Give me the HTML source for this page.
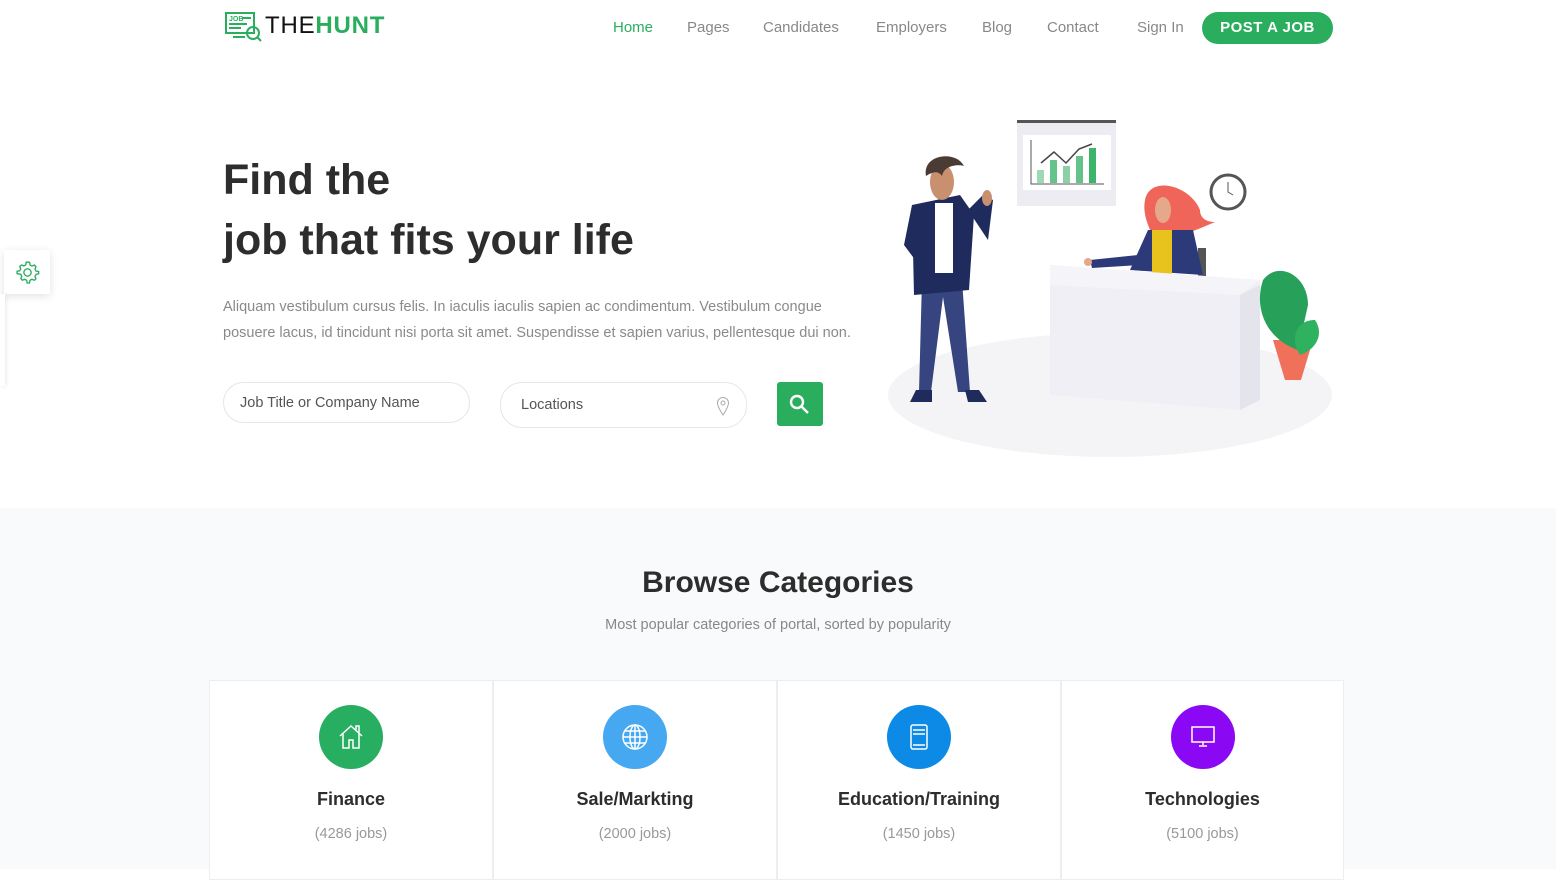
<!DOCTYPE html>
<html><head><meta charset="utf-8"><style>
*{box-sizing:border-box;margin:0;padding:0}
body{width:1556px;height:869px;overflow:hidden;background:#fff;font-family:"Liberation Sans",sans-serif;position:relative}
.abs{position:absolute}
nav a{position:absolute;top:19px;font-size:15px;color:#888;text-decoration:none}
.btn{left:1202px;top:12px;width:131px;height:32px;border-radius:16px;background:#2aae5e;color:#fff;font-size:15px;font-weight:bold;text-align:center;line-height:32px;letter-spacing:.5px}
h1{position:absolute;left:223px;font-size:43px;font-weight:bold;color:#2d2d2d}
.p{left:223px;font-size:14.5px;color:#8a8a8a;line-height:26px;width:640px}
.inp{border:1px solid #e6e6e6;border-radius:22px;height:42px;font-size:14.5px;color:#555;padding-left:16px;line-height:40px}
.sec{left:0;top:508px;width:1556px;height:361px;background:#f8fafc}
.card{top:680px;width:284px;height:200px;background:#fff;border:1px solid #eceff2;text-align:center}
.circ{width:64px;height:64px;border-radius:50%;margin:24px auto 0;display:flex;align-items:center;justify-content:center}
.card h3{font-size:18px;color:#2d2d2d;margin-top:20px}
.card p{font-size:14.5px;color:#999;margin-top:16px}
</style></head><body>
<svg class="abs" style="left:225px;top:12px" width="38" height="30" viewBox="0 0 38 30" fill="none" stroke="#2aae5e" stroke-width="2"><rect x="1" y="1" width="28" height="20"/><text x="4" y="9" font-size="7" fill="#2aae5e" stroke="none" font-weight="bold" font-family="Liberation Sans">JOB</text><line x1="17" y1="6" x2="26" y2="6"/><line x1="4" y1="12" x2="22" y2="12"/><line x1="4" y1="16" x2="16" y2="16"/><line x1="8" y1="25" x2="20" y2="25"/><circle cx="28" cy="21" r="6"/><line x1="32" y1="25" x2="36" y2="29"/></svg>
<div class="abs" style="left:265px;top:12px;font-size:24px;letter-spacing:.8px"><span style="color:#111">THE</span><b style="color:#2aae5e">HUNT</b></div>
<nav><a style="left:613px;color:#2aae5e">Home</a><a style="left:687px">Pages</a><a style="left:763px">Candidates</a><a style="left:876px">Employers</a><a style="left:982px">Blog</a><a style="left:1047px">Contact</a><a style="left:1137px">Sign In</a></nav>
<div class="abs btn">POST A JOB</div>
<div class="abs" style="left:4px;top:250px;width:46px;height:44px;background:#fff;box-shadow:0 2px 8px rgba(0,0,0,.12)"></div>
<div class="abs" style="left:0;top:294px;width:5px;height:92px;background:#fff;box-shadow:1px 0 4px rgba(0,0,0,.1)"></div>
<svg class="abs" style="left:15px;top:260px" width="25" height="25" viewBox="0 0 24 24" fill="none" stroke="#2aae5e" stroke-width="1.3"><circle cx="12" cy="12" r="3.5"/><path d="M12 2l2 .3.5 2.5 1.8 1 2.4-.9 1.4 1.5-.9 2.4 1 1.8 2.5.5v2.2l-2.5.5-1 1.8.9 2.4-1.5 1.4-2.4-.9-1.8 1-.5 2.5h-2.2l-.5-2.5-1.8-1-2.4.9-1.4-1.5.9-2.4-1-1.8L2 13.1v-2.2l2.5-.5 1-1.8-.9-2.4 1.5-1.4 2.4.9 1.8-1L10.8 2z"/></svg>
<h1 style="top:156px">Find the</h1>
<h1 style="top:216px">job that fits your life</h1>
<div class="abs p" style="top:294px">Aliquam vestibulum cursus felis. In iaculis iaculis sapien ac condimentum. Vestibulum congue posuere lacus, id tincidunt nisi porta sit amet. Suspendisse et sapien varius, pellentesque dui non.</div>
<div class="abs inp" style="left:223px;top:382px;width:247px;height:41px">Job Title or Company Name</div>
<div class="abs inp" style="left:500px;top:382px;width:247px;height:46px;line-height:44px;padding-left:20px">Locations<svg style="position:absolute;right:16px;top:13px" width="14" height="20" viewBox="0 0 14 20" fill="none" stroke="#aaa"><path d="M7 19C3 13 1.5 10 1.5 7a5.5 5.5 0 0 1 11 0c0 3-1.5 6-5.5 12z"/><circle cx="7" cy="7" r="2"/></svg></div>
<div class="abs" style="left:777px;top:382px;width:46px;height:44px;background:#2aae5e;border-radius:3px"><svg style="margin:12px" width="22" height="22" viewBox="0 0 22 22" fill="none" stroke="#fff" stroke-width="2.4"><circle cx="8" cy="8" r="6"/><line x1="12.5" y1="12.5" x2="19" y2="19"/></svg></div>
<svg class="abs" style="left:880px;top:110px" width="460" height="350" viewBox="0 0 460 350">
<ellipse cx="230" cy="285" rx="222" ry="62" fill="#f4f4f6"/>
<rect x="137" y="10" width="99" height="86" fill="#ececf2"/><rect x="137" y="10" width="99" height="3" fill="#555"/><rect x="143" y="25" width="88" height="55" fill="#fff"/>
<g fill="#3cb46a"><rect x="157" y="60" width="7" height="13" opacity=".5"/><rect x="170" y="50" width="7" height="23" opacity=".8"/><rect x="183" y="56" width="7" height="17" opacity=".6"/><rect x="196" y="46" width="7" height="27" opacity=".8"/><rect x="209" y="38" width="7" height="35"/></g>
<polyline points="161,53 174,42 186,53 199,39 212,34" fill="none" stroke="#444" stroke-width="1.5"/><path d="M151 30v44h73" stroke="#555" fill="none"/>
<circle cx="348" cy="82" r="17" fill="#fff" stroke="#555" stroke-width="3"/><path d="M348 72v10l5 3" stroke="#555" fill="none"/>
<path d="M320 100c-10-25-50-35-55-10-3 15 5 30 10 40 15 0 30-5 60-18-10 0-15-5-15-12z" fill="#f0655a"/>
<ellipse cx="283" cy="100" rx="8" ry="13" fill="#e6a88a"/>
<rect x="318" y="138" width="8" height="30" fill="#555"/>
<path d="M250 160l18-40h45l10 45z" fill="#2c3a7a"/><rect x="272" y="120" width="20" height="45" fill="#e8c21d"/>
<path d="M210 150l48-5 2 10-48 3z" fill="#2c3a7a"/><circle cx="208" cy="152" r="4" fill="#e6a88a"/>
<path d="M170 155l210 15v120l-20 10-190-15z" fill="#efeff5"/><path d="M170 155l210 15-20 15-190-10z" fill="#f5f5f9"/><path d="M380 175v115l-20 10V185z" fill="#e4e4ec"/>
<path d="M405 270l-12-40h40l-12 40z" fill="#f0705a"/><path d="M418 240c-30-10-45-40-35-70 15-20 45-5 45 25z" fill="#27a05a"/><path d="M420 245c-10-15-5-35 15-35 10 15 0 30-15 35z" fill="#2fb260"/>
<path d="M42 170l-3 112h12l12-95 15 95h12l-8-112z" fill="#36457f"/>
<path d="M36 280h16v12H30z M85 280h14l8 12H88z" fill="#1f2b5c"/>
<path d="M32 95l48-10 14 20-5 75-55 5z" fill="#1f2b5c"/><path d="M55 93h18v70H55z" fill="#fff"/>
<path d="M32 95l-8 40 15 20 10-10z" fill="#1f2b5c"/><path d="M88 100l15-15 10 5-5 40z" fill="#1f2b5c"/><ellipse cx="107" cy="88" rx="5" ry="8" fill="#c99070"/>
<ellipse cx="62" cy="72" rx="12" ry="18" fill="#c99070"/><path d="M46 66c-4-22 30-26 38-10-8-2-20 0-22 10-4-6-10-4-16 0z" fill="#4a3b35"/>
</svg>
<div class="abs sec"></div>
<div class="abs" style="left:0;top:566px;width:1556px;text-align:center;font-size:30px;font-weight:bold;color:#2d2d2d">Browse Categories</div>
<div class="abs" style="left:0;top:617px;width:1556px;text-align:center;font-size:14.5px;color:#888">Most popular categories of portal, sorted by popularity</div>
<div class="abs card" style="left:209px"><div class="circ" style="background:#27ae60"><svg width="30" height="30" viewBox="0 0 30 30" fill="none" stroke="#fff" stroke-width="1.5"><path d="M4 14L15 4l11 10M7 11v15h6v-8h4v8h6V11"/><path d="M20 8V4h3v7"/></svg></div><h3>Finance</h3><p>(4286 jobs)</p></div>
<div class="abs card" style="left:493px"><div class="circ" style="background:#45a8f0"><svg width="30" height="30" viewBox="0 0 30 30" fill="none" stroke="#fff" stroke-width="1.5"><circle cx="15" cy="15" r="12"/><ellipse cx="15" cy="15" rx="5" ry="12"/><path d="M3 15h24M5 9h20M5 21h20M15 3v24"/></svg></div><h3>Sale/Markting</h3><p>(2000 jobs)</p></div>
<div class="abs card" style="left:777px"><div class="circ" style="background:#0d8ae6"><svg width="30" height="30" viewBox="0 0 30 30" fill="none" stroke="#fff" stroke-width="1.5"><rect x="7" y="3" width="16" height="24" rx="2"/><path d="M9 8h12M9 12h12M9 23h12"/></svg></div><h3>Education/Training</h3><p>(1450 jobs)</p></div>
<div class="abs card" style="left:1061px;width:283px"><div class="circ" style="background:#8b08f5"><svg width="30" height="30" viewBox="0 0 30 30" fill="none" stroke="#fff" stroke-width="1.5"><rect x="4" y="5" width="22" height="15"/><path d="M15 20v3M11 24h8"/></svg></div><h3>Technologies</h3><p>(5100 jobs)</p></div>
</body></html>
